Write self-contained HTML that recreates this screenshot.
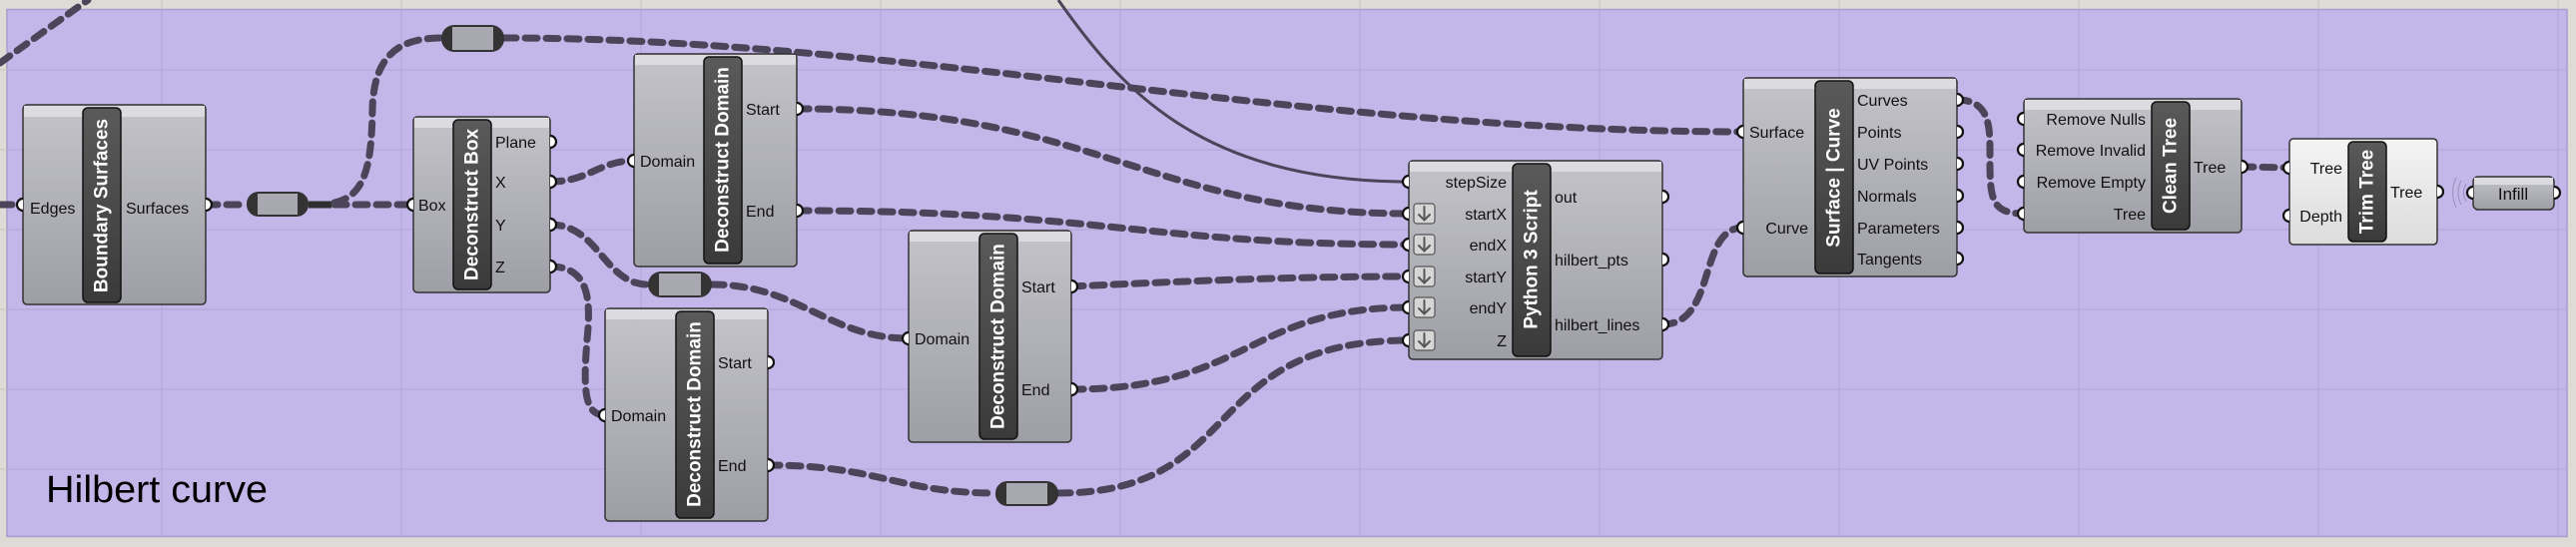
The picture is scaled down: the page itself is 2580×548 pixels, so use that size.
<!DOCTYPE html>
<html><head><meta charset="utf-8"><style>
html,body{margin:0;padding:0;background:#dcdbd5;}
svg{display:block;font-family:"Liberation Sans",Arial,sans-serif;}
.l{font-size:16px;fill:#111;}
.t{font-size:19px;font-weight:bold;fill:#fff;}
.w{fill:none;stroke:#4b4559;stroke-width:7;stroke-dasharray:12 9;stroke-linecap:round;}
.s{fill:#fff;stroke:#111;stroke-width:2.2;}
</style></head><body>
<svg width="2580" height="548" viewBox="0 0 2580 548" xmlns="http://www.w3.org/2000/svg">
<defs>
<linearGradient id="body" x1="0" y1="0" x2="0" y2="1"><stop offset="0" stop-color="#c3c3c9"/><stop offset="1" stop-color="#9e9ea6"/></linearGradient>
<linearGradient id="bodyw" x1="0" y1="0" x2="0" y2="1"><stop offset="0" stop-color="#f4f4f4"/><stop offset="1" stop-color="#dcdcdc"/></linearGradient>
<linearGradient id="title" x1="0" y1="0" x2="0" y2="1"><stop offset="0" stop-color="#5a5a5a"/><stop offset="1" stop-color="#3a3a3a"/></linearGradient>
</defs>
<rect x="0" y="0" width="2580" height="548" fill="#dcdbd5"/>
<rect x="7" y="9.5" width="2564" height="528" fill="#c3b6e9" stroke="#a79bd0" stroke-width="1.5"/>
<g stroke="#b1a5d6" stroke-width="1">
<path d="M162,9V538M402,9V538M642,9V538M882,9V538M1122,9V538M1362,9V538M1602,9V538M1842,9V538M2082,9V538M2322,9V538M2562,9V538"/>
<path d="M7,70H2571M7,150H2571M7,230H2571M7,310H2571M7,390H2571M7,470H2571"/>
</g>
<g stroke="#c9c6bd" stroke-width="1"><path d="M162,0V9M402,0V9M642,0V9M882,0V9M1122,0V9M1362,0V9M1602,0V9M1842,0V9M2082,0V9M2322,0V9M2562,0V9M0,70H7M0,150H7M0,230H7M0,310H7M0,390H7M0,470H7"/></g>

<text x="46" y="503" style="font-size:38px;fill:#000;" textLength="222" lengthAdjust="spacingAndGlyphs">Hilbert curve</text>

<!-- wires -->
<path class="w" d="M0,63 L88,0"/>
<path class="w" d="M0,205 L23,205"/>
<path class="w" d="M206,205 L247,205"/>
<path d="M309,205 L332,205" stroke="#2e2e2e" stroke-width="7"/>
<path class="w" d="M335,205 L414,205"/>
<path class="w" d="M335,203 C368,196 372,160 373,110 C374,60 395,38 442,38"/>
<path class="w" d="M505,38 C900,38 1300,132 1746,132"/>
<path class="w" d="M551,182 C590,182 600,161 635,161"/>
<path class="w" d="M551,225 C600,225 605,285 649,285"/>
<path class="w" d="M713,285 C800,285 830,339 910,339"/>
<path class="w" d="M551,267 C590,267 592,300 588,340 C584,390 585,416 606,416"/>
<path class="w" d="M798,109 C1100,109 1150,214 1411,214"/>
<path class="w" d="M798,211 C1100,211 1150,245 1411,245"/>
<path class="w" d="M1073,287 C1200,281 1300,277 1411,277"/>
<path class="w" d="M1073,390 C1250,390 1250,308 1411,308"/>
<path class="w" d="M769,466 C880,466 900,494 997,494"/>
<path class="w" d="M1060,494 C1250,494 1200,341 1411,341"/>
<path class="w" d="M1665,325 C1720,325 1700,228 1746,228"/>
<path class="w" d="M1960,100 C1995,100 1993,130 1993,160 C1993,200 1995,214 2027,214"/>
<path class="w" d="M2245,167 L2293,168"/>
<path d="M1060,0 C1120,85 1200,182 1411,182" fill="none" stroke="#4a4458" stroke-width="3"/>

<!-- relays -->
<g>
<rect x="247" y="192" width="62" height="25" rx="12" fill="#333"/><rect x="258" y="194" width="40" height="21" fill="#a8a8b0"/>
<rect x="442" y="25" width="63" height="27" rx="13" fill="#333"/><rect x="453" y="27" width="41" height="23" fill="#a8a8b0"/>
<rect x="649" y="272" width="64" height="26" rx="13" fill="#333"/><rect x="660" y="274" width="42" height="22" fill="#a8a8b0"/>
<rect x="997" y="482" width="63" height="25" rx="12" fill="#333"/><rect x="1008" y="484" width="41" height="21" fill="#a8a8b0"/>
</g>

<!-- Boundary Surfaces -->
<g>
<rect x="23" y="105" width="183" height="200" rx="4" fill="url(#body)" stroke="#333" stroke-width="1.5"/>
<rect x="24" y="106" width="181" height="11" fill="#dcdce0"/>
<rect x="83" y="108" width="38" height="195" rx="5" fill="url(#title)" stroke="#111" stroke-width="1.5"/>
<text class="t" transform="translate(102,206) rotate(-90)" text-anchor="middle" dominant-baseline="central">Boundary Surfaces</text>
<text class="l" x="30" y="214">Edges</text>
<text class="l" x="126" y="214">Surfaces</text>
<path class="s" d="M23,199 A6,6 0 0 0 23,211"/><path class="s" d="M206,199 A6,6 0 0 1 206,211"/>
</g>

<!-- Deconstruct Box -->
<g>
<rect x="414" y="117" width="137" height="176" rx="4" fill="url(#body)" stroke="#333" stroke-width="1.5"/>
<rect x="415" y="118" width="135" height="10" fill="#dcdce0"/>
<rect x="454" y="120" width="38" height="170" rx="5" fill="url(#title)" stroke="#111" stroke-width="1.5"/>
<text class="t" transform="translate(473,205) rotate(-90)" text-anchor="middle" dominant-baseline="central">Deconstruct Box</text>
<text class="l" x="419" y="211">Box</text>
<text class="l" x="496" y="148">Plane</text><text class="l" x="496" y="188">X</text><text class="l" x="496" y="231">Y</text><text class="l" x="496" y="273">Z</text>
<path class="s" d="M414,199 A6,6 0 0 0 414,211"/>
<path class="s" d="M551,136 A6,6 0 0 1 551,148"/><path class="s" d="M551,176 A6,6 0 0 1 551,188"/><path class="s" d="M551,219 A6,6 0 0 1 551,231"/><path class="s" d="M551,261 A6,6 0 0 1 551,273"/>
</g>

<!-- Deconstruct Domain 1 -->
<g>
<rect x="635" y="54" width="163" height="213" rx="4" fill="url(#body)" stroke="#333" stroke-width="1.5"/>
<rect x="636" y="55" width="161" height="10" fill="#dcdce0"/>
<rect x="705" y="57" width="38" height="207" rx="5" fill="url(#title)" stroke="#111" stroke-width="1.5"/>
<text class="t" transform="translate(724,160) rotate(-90)" text-anchor="middle" dominant-baseline="central">Deconstruct Domain</text>
<text class="l" x="641" y="167">Domain</text>
<text class="l" x="747" y="115">Start</text><text class="l" x="747" y="217">End</text>
<path class="s" d="M635,155 A6,6 0 0 0 635,167"/>
<path class="s" d="M798,103 A6,6 0 0 1 798,115"/><path class="s" d="M798,205 A6,6 0 0 1 798,217"/>
</g>

<!-- Deconstruct Domain 3 -->
<g>
<rect x="606" y="309" width="163" height="213" rx="4" fill="url(#body)" stroke="#333" stroke-width="1.5"/>
<rect x="607" y="310" width="161" height="10" fill="#dcdce0"/>
<rect x="677" y="312" width="38" height="207" rx="5" fill="url(#title)" stroke="#111" stroke-width="1.5"/>
<text class="t" transform="translate(696,415) rotate(-90)" text-anchor="middle" dominant-baseline="central">Deconstruct Domain</text>
<text class="l" x="612" y="422">Domain</text>
<text class="l" x="719" y="369">Start</text><text class="l" x="719" y="472">End</text>
<path class="s" d="M606,410 A6,6 0 0 0 606,422"/>
<path class="s" d="M769,357 A6,6 0 0 1 769,369"/><path class="s" d="M769,460 A6,6 0 0 1 769,472"/>
</g>

<!-- Deconstruct Domain 2 -->
<g>
<rect x="910" y="231" width="163" height="212" rx="4" fill="url(#body)" stroke="#333" stroke-width="1.5"/>
<rect x="911" y="232" width="161" height="10" fill="#dcdce0"/>
<rect x="981" y="234" width="38" height="206" rx="5" fill="url(#title)" stroke="#111" stroke-width="1.5"/>
<text class="t" transform="translate(1000,337) rotate(-90)" text-anchor="middle" dominant-baseline="central">Deconstruct Domain</text>
<text class="l" x="916" y="345">Domain</text>
<text class="l" x="1023" y="293">Start</text><text class="l" x="1023" y="396">End</text>
<path class="s" d="M910,333 A6,6 0 0 0 910,345"/>
<path class="s" d="M1073,281 A6,6 0 0 1 1073,293"/><path class="s" d="M1073,384 A6,6 0 0 1 1073,396"/>
</g>

<!-- Python 3 Script -->
<g>
<rect x="1411" y="161" width="254" height="199" rx="4" fill="url(#body)" stroke="#333" stroke-width="1.5"/>
<rect x="1412" y="162" width="252" height="10" fill="#dcdce0"/>
<rect x="1515" y="164" width="38" height="193" rx="5" fill="url(#title)" stroke="#111" stroke-width="1.5"/>
<text class="t" transform="translate(1534,260) rotate(-90)" text-anchor="middle" dominant-baseline="central">Python 3 Script</text>
<g class="l" text-anchor="end">
<text x="1509" y="188">stepSize</text><text x="1509" y="220">startX</text><text x="1509" y="251">endX</text><text x="1509" y="283">startY</text><text x="1509" y="314">endY</text><text x="1509" y="347">Z</text>
</g>
<text class="l" x="1557" y="203">out</text><text class="l" x="1557" y="266">hilbert_pts</text><text class="l" x="1557" y="331">hilbert_lines</text>
<g fill="#d6d6d6" stroke="#555" stroke-width="1.2">
<rect x="1416" y="204" width="21" height="20" rx="3"/><rect x="1416" y="235" width="21" height="20" rx="3"/><rect x="1416" y="267" width="21" height="20" rx="3"/><rect x="1416" y="298" width="21" height="20" rx="3"/><rect x="1416" y="331" width="21" height="20" rx="3"/>
</g>
<g fill="none" stroke="#555" stroke-width="2" stroke-linecap="round">
<path d="M1426.5,207v13M1421,215l5.5,5.5 5.5,-5.5"/><path d="M1426.5,238v13M1421,246l5.5,5.5 5.5,-5.5"/><path d="M1426.5,270v13M1421,278l5.5,5.5 5.5,-5.5"/><path d="M1426.5,301v13M1421,309l5.5,5.5 5.5,-5.5"/><path d="M1426.5,334v13M1421,342l5.5,5.5 5.5,-5.5"/>
</g>
<path class="s" d="M1411,176 A6,6 0 0 0 1411,188"/><path class="s" d="M1411,208 A6,6 0 0 0 1411,220"/><path class="s" d="M1411,239 A6,6 0 0 0 1411,251"/><path class="s" d="M1411,271 A6,6 0 0 0 1411,283"/><path class="s" d="M1411,302 A6,6 0 0 0 1411,314"/><path class="s" d="M1411,335 A6,6 0 0 0 1411,347"/>
<path class="s" d="M1665,191 A6,6 0 0 1 1665,203"/><path class="s" d="M1665,254 A6,6 0 0 1 1665,266"/><path class="s" d="M1665,319 A6,6 0 0 1 1665,331"/>
</g>

<!-- Surface | Curve -->
<g>
<rect x="1746" y="78" width="214" height="199" rx="4" fill="url(#body)" stroke="#333" stroke-width="1.5"/>
<rect x="1747" y="79" width="212" height="10" fill="#dcdce0"/>
<rect x="1818" y="81" width="38" height="193" rx="5" fill="url(#title)" stroke="#111" stroke-width="1.5"/>
<text class="t" transform="translate(1837,178) rotate(-90)" text-anchor="middle" dominant-baseline="central">Surface | Curve</text>
<text class="l" x="1752" y="138">Surface</text><text class="l" x="1811" y="234" text-anchor="end">Curve</text>
<text class="l" x="1860" y="106">Curves</text><text class="l" x="1860" y="138">Points</text><text class="l" x="1860" y="170">UV Points</text><text class="l" x="1860" y="202">Normals</text><text class="l" x="1860" y="234">Parameters</text><text class="l" x="1860" y="265">Tangents</text>
<path class="s" d="M1746,126 A6,6 0 0 0 1746,138"/><path class="s" d="M1746,222 A6,6 0 0 0 1746,234"/>
<path class="s" d="M1960,94 A6,6 0 0 1 1960,106"/><path class="s" d="M1960,126 A6,6 0 0 1 1960,138"/><path class="s" d="M1960,158 A6,6 0 0 1 1960,170"/><path class="s" d="M1960,190 A6,6 0 0 1 1960,202"/><path class="s" d="M1960,222 A6,6 0 0 1 1960,234"/><path class="s" d="M1960,253 A6,6 0 0 1 1960,265"/>
</g>

<!-- Clean Tree -->
<g>
<rect x="2027" y="99" width="218" height="134" rx="4" fill="url(#body)" stroke="#333" stroke-width="1.5"/>
<rect x="2028" y="100" width="216" height="10" fill="#dcdce0"/>
<rect x="2155" y="102" width="38" height="128" rx="5" fill="url(#title)" stroke="#111" stroke-width="1.5"/>
<text class="t" transform="translate(2174,166) rotate(-90)" text-anchor="middle" dominant-baseline="central">Clean Tree</text>
<g class="l" text-anchor="end"><text x="2149" y="125">Remove Nulls</text><text x="2149" y="156">Remove Invalid</text><text x="2149" y="188">Remove Empty</text><text x="2149" y="220">Tree</text></g>
<text class="l" x="2197" y="173">Tree</text>
<path class="s" d="M2027,113 A6,6 0 0 0 2027,125"/><path class="s" d="M2027,144 A6,6 0 0 0 2027,156"/><path class="s" d="M2027,176 A6,6 0 0 0 2027,188"/><path class="s" d="M2027,208 A6,6 0 0 0 2027,220"/>
<path class="s" d="M2245,161 A6,6 0 0 1 2245,173"/>
</g>

<!-- Trim Tree -->
<g>
<rect x="2293" y="139" width="148" height="106" rx="4" fill="url(#bodyw)" stroke="#333" stroke-width="1.5"/>
<rect x="2352" y="142" width="38" height="100" rx="5" fill="url(#title)" stroke="#111" stroke-width="1.5"/>
<text class="t" transform="translate(2371,192) rotate(-90)" text-anchor="middle" dominant-baseline="central">Trim Tree</text>
<text class="l" x="2346" y="174" text-anchor="end">Tree</text><text class="l" x="2346" y="222" text-anchor="end">Depth</text>
<text class="l" x="2394" y="198">Tree</text>
<path class="s" d="M2293,162 A6,6 0 0 0 2293,174"/><path class="s" d="M2293,210 A6,6 0 0 0 2293,222"/>
<path class="s" d="M2441,186 A6,6 0 0 1 2441,198"/>
</g>
<g fill="none" stroke="#9a90b8" stroke-width="1"><path d="M2460,178 Q2453,193 2460,208"/><path d="M2465,181 Q2459,193 2465,205"/><path d="M2470,184 Q2465,193 2470,202"/></g>

<!-- Infill -->
<g>
<rect x="2477" y="177" width="81" height="33" rx="5" fill="url(#body)" stroke="#333" stroke-width="1.5"/>
<rect x="2478" y="178" width="79" height="7" fill="#dcdce0"/>
<text class="l" x="2517" y="200" text-anchor="middle" style="font-size:17px">Infill</text>
<path class="s" d="M2477,187 A6,6 0 0 0 2477,199"/><path class="s" d="M2558,187 A6,6 0 0 1 2558,199"/>
</g>
</svg>
</body></html>
